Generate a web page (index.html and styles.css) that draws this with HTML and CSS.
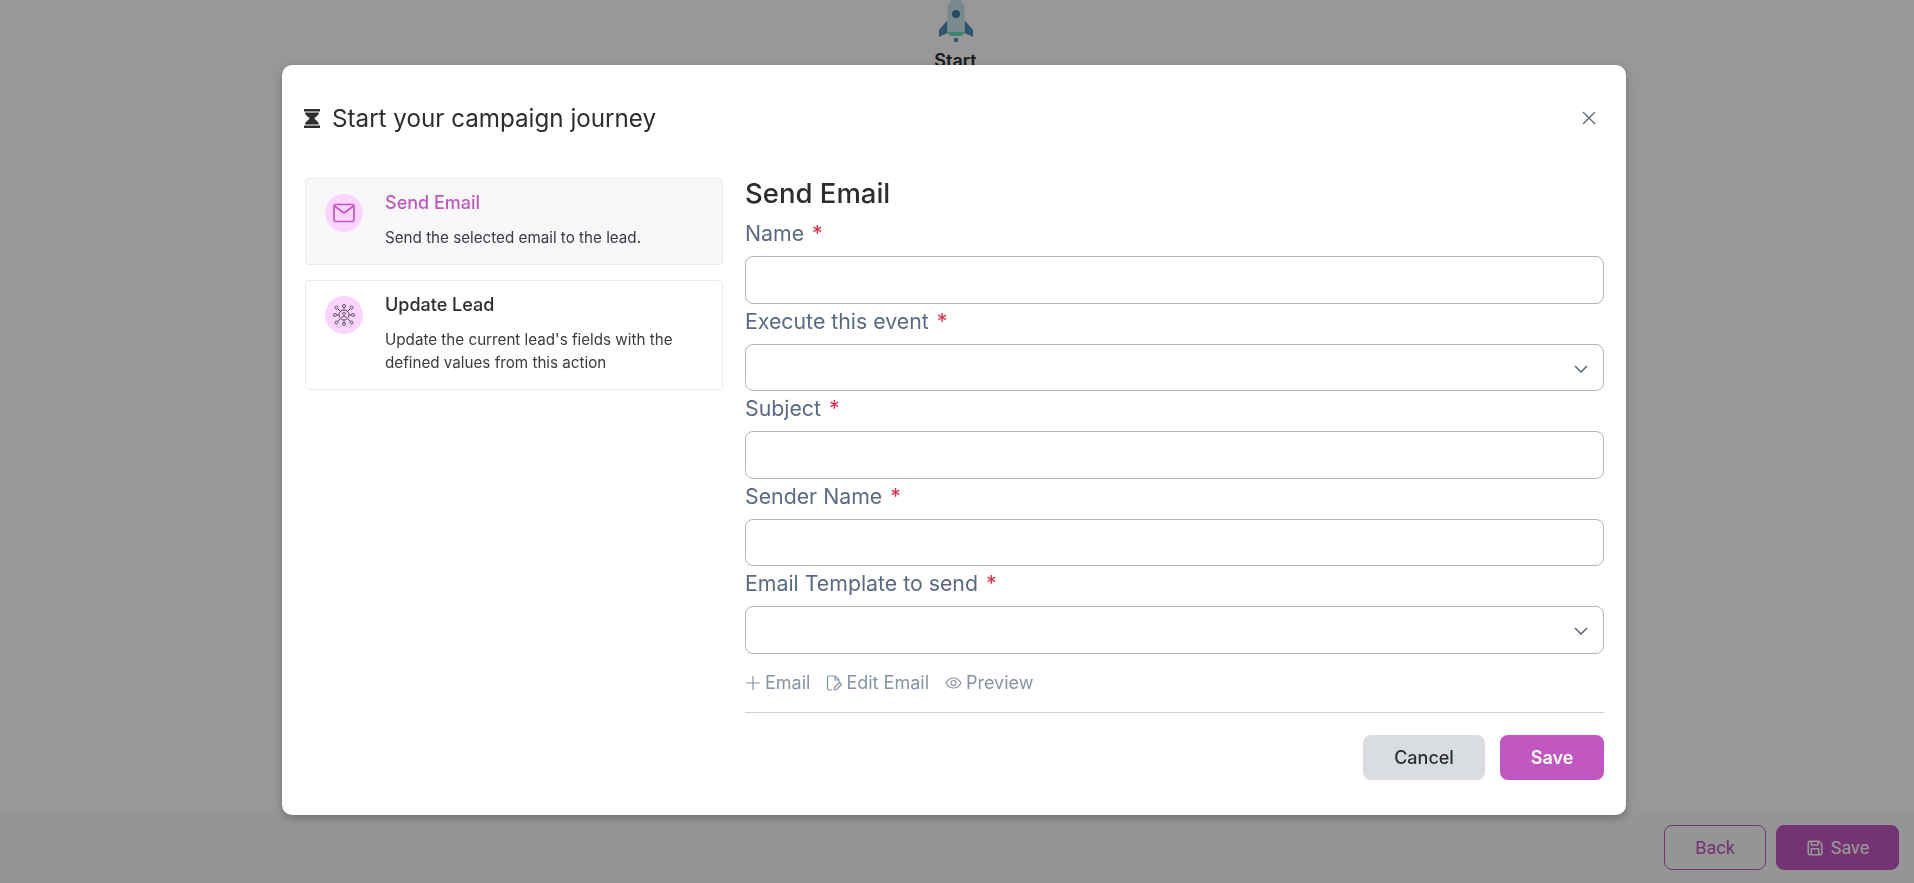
FILE: index.html
```html
<!DOCTYPE html>
<html>
<head>
	<title>Campaign Journey</title>
	<meta charset="utf-8">
	<meta name="viewport" content="width=device-width, initial-scale=1">
	<link rel="stylesheet" href="styles.css">
</head>
<body>
	<div class="page">
		<main class="canvas">
			<div class="start-node">
				<svg class="rocket" width="36" height="44" viewBox="0 0 36 44">
					<path d="M9.500 20 L1 30 V37 L9.500 33 Z" fill="#4f8fb8"/>
					<path d="M26.500 20 L35 30 V37 L26.500 33 Z" fill="#4f8fb8"/>
					<path d="M14 -1 H22 L26.500 5 V32 L24 36 H12 L9.500 32 V5 Z" fill="#cce6ea"/>
					<path d="M9.500 32 H26.500 L24 36 H12 Z" fill="#6fdcc0"/>
					<circle cx="18" cy="14" r="4" fill="#3f7ea8"/>
					<rect x="16" y="38" width="4" height="4" fill="#4f8fb8"/>
				</svg>
				<div class="start-label">Start</div>
			</div>
		</main>
		<footer class="bottom-bar">
			<button class="bar-btn bar-back">Back</button>
			<button class="bar-btn bar-save">
				<svg width="18" height="18" viewBox="0 0 24 24" fill="none" stroke="currentColor" stroke-width="2" stroke-linejoin="round">
					<path d="M5 3h12l4 4v12a2 2 0 0 1-2 2H5a2 2 0 0 1-2-2V5a2 2 0 0 1 2-2z"/>
					<path d="M7 3v5h9V3"/>
					<path d="M7 21v-8h10v8"/>
				</svg>
				Save
			</button>
		</footer>
	</div>

	<div class="overlay"></div>

	<section class="modal">
		<header class="modal-head">
			<svg class="hourglass" width="16" height="19" viewBox="0 0 16 19">
				<path d="M0 0h16v2.500H0zM0 16.500h16V19H0z" fill="#2d2d2d"/>
				<path d="M1 3.500h14c0 3-4 4.500-4.500 6 .5 1.500 4.500 3 4.500 6H1c0-3 4-4.500 4.500-6C5 8 1 6.500 1 3.500z" fill="#2d2d2d"/>
			</svg>
			<h2 class="modal-title">Start your campaign journey</h2>
			<svg class="close" width="14" height="14" viewBox="0 0 14 14" fill="none" stroke="#5f6b7a" stroke-width="1.400">
				<path d="M1 1l12 12M13 1L1 13"/>
			</svg>
		</header>
		<div class="modal-body">
			<aside class="actions">
				<div class="action action-active">
					<span class="action-icon">
						<svg width="22" height="20" viewBox="0 0 22 20" fill="none" stroke="#c157c1" stroke-width="1.700" stroke-linejoin="round">
							<rect x="1" y="1.500" width="20" height="17" rx="1.500"/>
							<path d="M1.500 3l9.500 7 9.500-7"/>
						</svg>
					</span>
					<div>
						<div class="action-name">Send Email</div>
						<p class="action-desc">Send the selected email to the lead.</p>
					</div>
				</div>
				<div class="action">
					<span class="action-icon">
						<svg width="22" height="22" viewBox="0 0 22 22" fill="none" stroke="#5b5470" stroke-width="1">
							<circle cx="11" cy="11" r="5"/>
							<circle cx="11" cy="9.700" r="1.500"/>
							<path d="M8.300 14c.5-2 4.900-2 5.400 0"/>
							<circle cx="11" cy="2" r="1.500"/>
							<circle cx="11" cy="20" r="1.500"/>
							<circle cx="2" cy="11" r="1.500"/>
							<circle cx="20" cy="11" r="1.500"/>
							<circle cx="3.500" cy="3.500" r="1.500"/>
							<circle cx="18.500" cy="3.500" r="1.500"/>
							<circle cx="3.500" cy="18.500" r="1.500"/>
							<circle cx="18.500" cy="18.500" r="1.500"/>
							<path d="M11 3.500V6M11 16v2.500M3.500 11H6M16 11h2.500M4.600 4.600l3 3M17.400 4.600l-3 3M4.600 17.400l3-3M17.400 17.400l-3-3"/>
						</svg>
					</span>
					<div>
						<div class="action-name">Update Lead</div>
						<p class="action-desc">Update the current lead's fields with the defined values from this action</p>
					</div>
				</div>
			</aside>
			<form class="form">
				<h3 class="form-title">Send Email</h3>
				<div class="field">
					<label class="field-label">Name <span class="req">*</span></label>
					<div class="input"></div>
				</div>
				<div class="field">
					<label class="field-label">Execute this event <span class="req">*</span></label>
					<div class="input">
						<svg class="chevron" width="14" height="8" viewBox="0 0 14 8" fill="none" stroke="#5f6b7a" stroke-width="1.600"><path d="M1 1l6 6 6-6"/></svg>
					</div>
				</div>
				<div class="field">
					<label class="field-label">Subject <span class="req">*</span></label>
					<div class="input"></div>
				</div>
				<div class="field">
					<label class="field-label">Sender Name <span class="req">*</span></label>
					<div class="input"></div>
				</div>
				<div class="field">
					<label class="field-label">Email Template to send <span class="req">*</span></label>
					<div class="input">
						<svg class="chevron" width="14" height="8" viewBox="0 0 14 8" fill="none" stroke="#5f6b7a" stroke-width="1.600"><path d="M1 1l6 6 6-6"/></svg>
					</div>
				</div>
				<div class="links">
					<a class="link">
						<svg width="16" height="16" viewBox="0 0 16 16" fill="none" stroke="currentColor" stroke-width="1.200"><path d="M8 1v14M1 8h14"/></svg>
						Email
					</a>
					<a class="link">
						<svg width="16" height="18" viewBox="0 0 16 18" fill="none" stroke="currentColor" stroke-width="1.200" stroke-linejoin="round">
							<path d="M6 16H3a1.500 1.500 0 0 1-1.500-1.500v-11A1.500 1.500 0 0 1 3 2h6l4 4v2"/>
							<path d="M9 2v4h4"/>
							<path d="M8 16l.5-2.500 5-5 2 2-5 5z"/>
						</svg>
						Edit Email
					</a>
					<a class="link">
						<svg width="17" height="14" viewBox="0 0 17 14" fill="none" stroke="currentColor" stroke-width="1.200">
							<path d="M1 7c2-3.500 4.500-5 7.500-5s5.500 1.500 7.500 5c-2 3.500-4.500 5-7.500 5S3 10.500 1 7z"/>
							<circle cx="8.500" cy="7" r="2.500"/>
						</svg>
						Preview
					</a>
				</div>
				<div class="form-foot">
					<button type="button" class="btn btn-cancel">Cancel</button>
					<button type="button" class="btn btn-save">Save</button>
				</div>
			</form>
		</div>
	</section>
</body>
</html>
```

FILE: styles.css
```css
* {
	box-sizing: border-box;
}

body {
	margin: 0;
	font-family: Inter, "Noto Sans", sans-serif;
	color: #2d2d2d;
	background: #fff;
}

.page {
	display: flex;
	flex-direction: column;
	height: 883px;
	overflow: hidden;
}

.canvas {
	flex: 1;
	display: flex;
	justify-content: center;
	background: #fdfdff;
	padding-right: 3px;
}

.start-node {
	text-align: center;
}

.rocket {
	display: block;
	margin: 0 auto;
}

.start-label {
	margin-top: 5px;
	font-size: 18px;
	font-weight: 600;
	line-height: 24px;
}

.bottom-bar {
	display: flex;
	justify-content: flex-end;
	gap: 10px;
	height: 73px;
	padding: 15px 15px 0 0;
	background: #f8f8f8;
}

.bar-btn {
	display: flex;
	align-items: center;
	justify-content: center;
	gap: 7px;
	height: 45px;
	border-radius: 8px;
	font-family: Roboto, sans-serif;
	font-size: 18px;
	font-weight: 400;
	border: 1px solid #c157c1;
}

.bar-back {
	width: 102px;
	color: #c157c1;
	background: transparent;
}

.bar-save {
	width: 123px;
	color: #fff;
	background: #c157c1;
}

.overlay {
	position: fixed;
	inset: 0;
	background: rgba(0, 0, 0, 0.4);
}

.modal {
	position: absolute;
	left: 282px;
	top: 65px;
	width: 1344px;
	height: 750px;
	padding: 0 22px 0 23px;
	background: #fff;
	border-radius: 10px;
	box-shadow: 0 3px 8px rgba(0, 0, 0, 0.25);
}

.modal-head {
	display: flex;
	align-items: center;
	gap: 12px;
	height: 113px;
	padding-bottom: 7px;
}

.hourglass {
	flex: none;
	margin-left: -1px;
}

.modal-title {
	flex: 1;
	margin: 0;
	font-size: 24.200px;
	font-weight: 400;
}

.close {
	margin-right: 8px;
}

.modal-body {
	display: flex;
	gap: 22px;
}

.actions {
	flex: none;
	width: 418px;
	display: flex;
	flex-direction: column;
	gap: 15px;
}

.action {
	display: flex;
	gap: 22px;
	padding: 13px 19px 15px;
	border: 1px solid #ebebee;
	border-radius: 4px;
}

.action-active {
	background: #f8f8fb;
}

.action-icon {
	flex: none;
	display: flex;
	align-items: center;
	justify-content: center;
	width: 38px;
	height: 38px;
	margin-top: 2px;
	border-radius: 50%;
	background: #fdd3ff;
}

.action-name {
	font-size: 18px;
	font-weight: 500;
	line-height: 22px;
}

.action-active .action-name {
	color: #c157c1;
}

.action-desc {
	margin: 12px 0 0;
	font-size: 15.200px;
	line-height: 23px;
	color: #3a3a40;
}

.form {
	flex: 1;
}

.form-title {
	margin: 0 0 8px;
	font-size: 27.500px;
	font-weight: 500;
	line-height: 30px;
}

.field {
	height: 87.500px;
}

.field-label {
	display: block;
	height: 40px;
	padding-top: 5px;
	font-size: 21.300px;
	line-height: 24px;
	color: #5a6a85;
}

.req {
	color: #e02f4d;
	margin-left: 2px;
}

.input {
	position: relative;
	height: 47.500px;
	border: 1px solid #b5b5b5;
	border-radius: 8px;
	background: #fff;
}

.chevron {
	position: absolute;
	right: 15px;
	top: 20px;
}

.links {
	display: flex;
	align-items: center;
	gap: 16px;
	height: 59px;
	border-bottom: 1px solid #cfcfcf;
}

.link {
	display: flex;
	align-items: center;
	gap: 4px;
	font-size: 18px;
	color: #8494a8;
}

.form-foot {
	display: flex;
	justify-content: flex-end;
	gap: 15px;
	margin-top: 22px;
}

.btn {
	height: 45px;
	border: none;
	border-radius: 8px;
	font-family: Inter, sans-serif;
	font-size: 18px;
	font-weight: 500;
}

.btn-cancel {
	width: 122px;
	background: #d9dde2;
	color: #2d2d2d;
}

.btn-save {
	width: 104px;
	background: #c157c1;
	color: #fff;
	font-weight: 600;
}
```
